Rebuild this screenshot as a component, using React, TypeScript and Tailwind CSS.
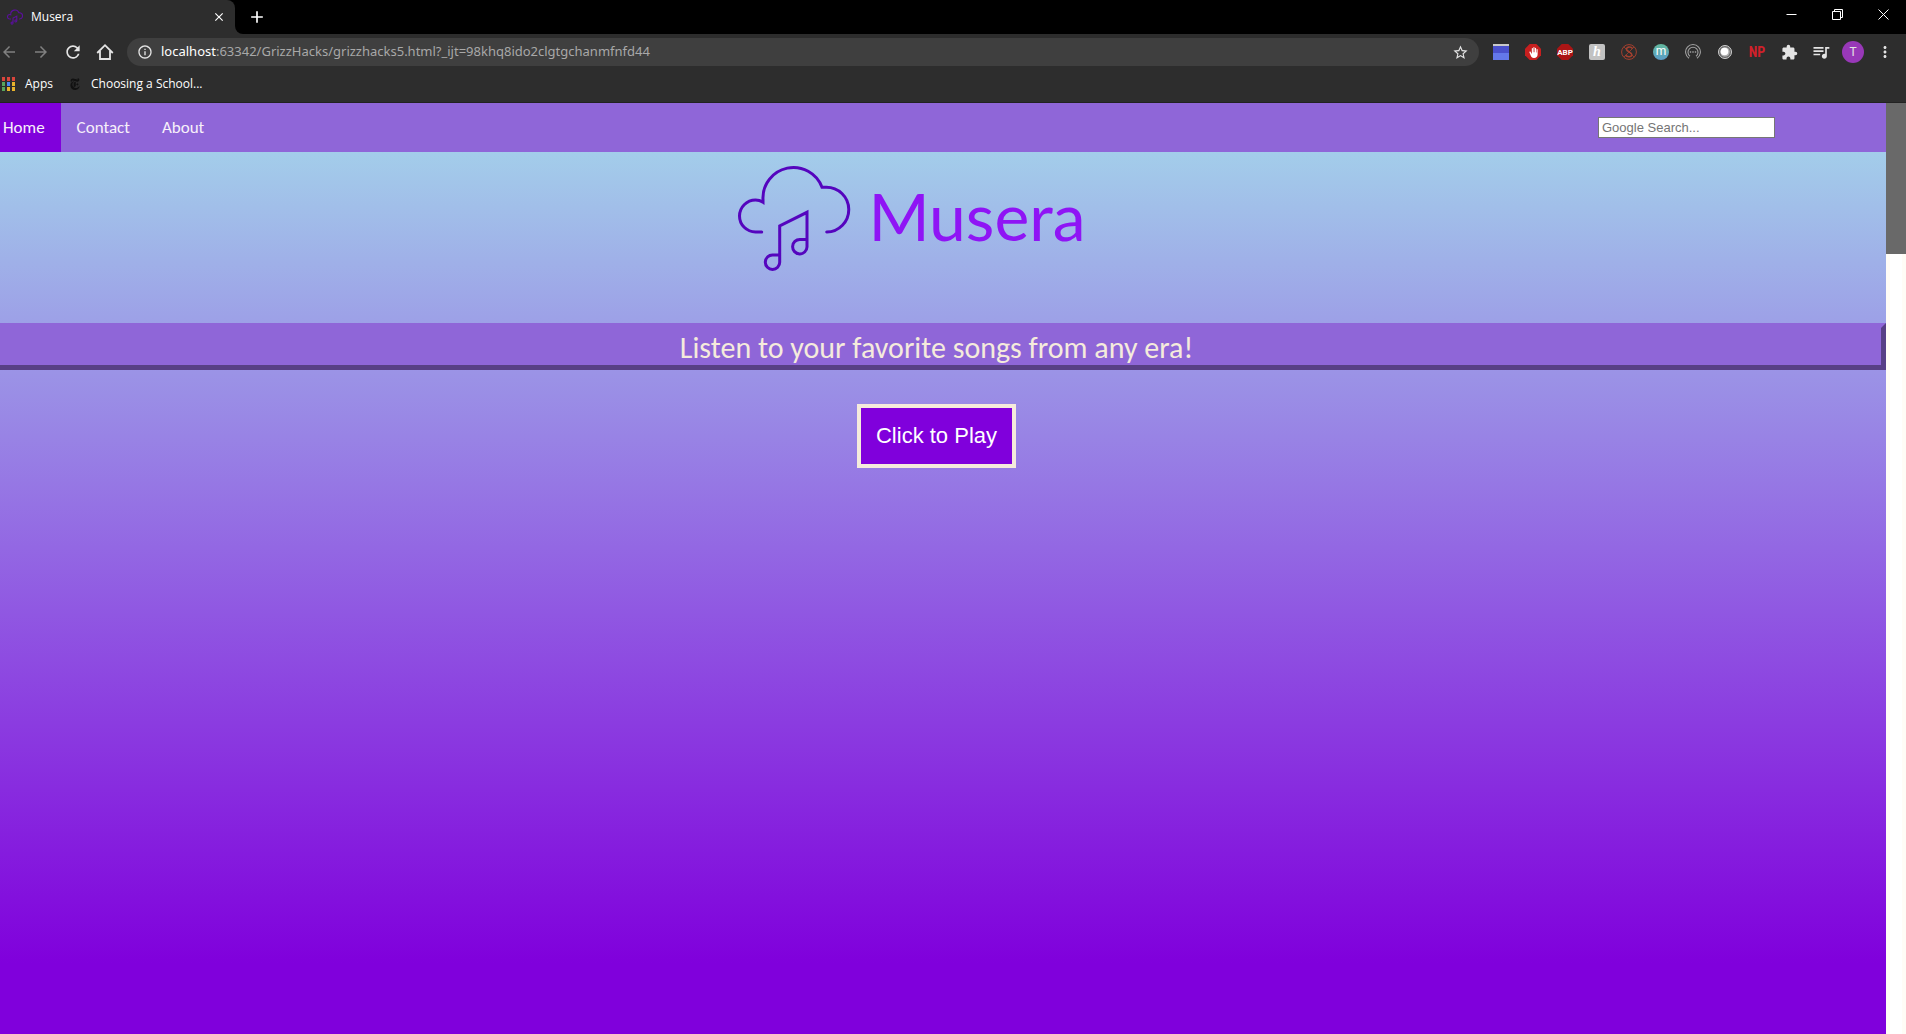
import { ReactNode } from "react";
import {
  MdStarBorder,
  MdRefresh,
  MdArrowBack,
  MdArrowForward,
  MdExtension,
  MdQueueMusic,
  MdInfoOutline,
  MdMoreVert,
  MdAdd,
  MdClose,
} from "react-icons/md";
import { IoHandRight } from "react-icons/io5";
import { SiNewyorktimes } from "react-icons/si";

const navLinks = [
  { label: "Contact", href: "#contact" },
  { label: "About", href: "#about" },
];

const appColors = [
  "bg-[#d9453c]", "bg-[#d9453c]", "bg-[#d9453c]",
  "bg-[#58a55c]", "bg-[#4a86f0]", "bg-[#e8b32c]",
  "bg-[#58a55c]", "bg-[#e8b32c]", "bg-[#e8b32c]",
];

function CloudNote({ className, strokeWidth }: { className: string; strokeWidth: number }) {
  return (
    <svg
      viewBox="0 0 116 106"
      className={className}
      fill="none"
      stroke="currentColor"
      strokeWidth={strokeWidth}
      strokeLinecap="round"
      aria-hidden="true"
    >
      <path d="M25.700 67H19.500a16 16 0 1 1 0-32q4 0 7.500 2.200V34.500A30.500 30.500 0 0 1 86 22.200H90A22.400 22.400 0 0 1 90.700 67" />
      <path d="M43.700 90V61L71 47.300V82a7.200 7.200 0 1 1-7-7.500H71M43.700 90V97a7.200 7.200 0 1 1-7-7H43.700" />
    </svg>
  );
}

function WindowButton({ label, d }: { label: string; d: string }) {
  return (
    <button aria-label={label} className="flex w-[46px] items-center justify-center">
      <svg viewBox="0 0 11 11" className="size-[11px]" fill="none" stroke="currentColor" aria-hidden="true">
        <path d={d} />
      </svg>
    </button>
  );
}

function TabStrip() {
  return (
    <div className="flex h-[34px] bg-[#2d2d2d] text-white">
      <div className="bg-black">
        <div className="flex h-full w-[235px] items-center rounded-tr-lg bg-[#2d2d2d] pl-[7px] pr-[9px]">
          <CloudNote className="size-4 text-[#5a109c]" strokeWidth={8} />
          <span className="ml-2 flex-1 text-xs">Musera</span>
          <button aria-label="Close tab">
            <MdClose className="size-[14px]" />
          </button>
        </div>
      </div>
      <div className="flex flex-1 justify-between rounded-bl-lg bg-black">
        <button aria-label="New tab" className="ml-3">
          <MdAdd className="size-5" />
        </button>
        <div className="flex pb-[5px]">
          <WindowButton label="Minimize" d="M0.500 5.500h10" />
          <WindowButton label="Restore" d="M0.500 2.500h8v8h-8zM2.500 2.500v-2h8v8h-2" />
          <WindowButton label="Close" d="M0.500 0.500l10 10M10.500 0.500l-10 10" />
        </div>
      </div>
    </div>
  );
}

function ToolButton({ label, children }: { label: string; children: ReactNode }) {
  return (
    <button aria-label={label} className="flex w-8 items-center justify-center">
      {children}
    </button>
  );
}

function Octagon({ color }: { color: string }) {
  return <path d="M4.700 0h6.600L16 4.700v6.600L11.300 16H4.700L0 11.300V4.700z" fill={color} />;
}

function Extensions() {
  return (
    <div className="ml-1.5 flex h-full pr-[5px]">
      <ToolButton label="Notes">
        <span className="size-4 border-t-2 border-[#c8c8c8] bg-linear-to-b from-[#4a50cc] from-50% to-[#6478ea] to-50%" />
      </ToolButton>
      <ToolButton label="AdBlock">
        <span className="grid size-4 place-items-center">
          <svg viewBox="0 0 16 16" className="col-start-1 row-start-1 size-4" aria-hidden="true">
            <Octagon color="#c71f1f" />
          </svg>
          <IoHandRight className="col-start-1 row-start-1 size-[11px] text-white" />
        </span>
      </ToolButton>
      <ToolButton label="Adblock Plus">
        <svg viewBox="0 0 16 16" className="size-4">
          <Octagon color="#ab1515" />
          <text x="8" y="11" textAnchor="middle" fill="#fff" className="font-['Roboto'] text-[8px] font-bold">ABP</text>
        </svg>
      </ToolButton>
      <ToolButton label="Honey">
        <span className="flex size-4 items-center justify-center rounded-xs bg-[#c2c2c2] font-['Liberation_Serif',serif] text-sm font-bold italic leading-none text-white">
          h
        </span>
      </ToolButton>
      <ToolButton label="Script blocker">
        <svg viewBox="0 0 16 16" className="size-4" fill="none" stroke="#a3402f" aria-hidden="true">
          <circle cx="8" cy="8" r="7.400" />
          <path d="M11.500 4.500C9.500 2 5 3 5.500 5.500S11 8 10.800 10.700 6 13.500 4.300 11" strokeWidth="1.600" />
          <path d="M2.700 2.700l10.600 10.600M13 3L3 13" strokeWidth="0.800" />
        </svg>
      </ToolButton>
      <ToolButton label="Mercury">
        <span className="flex size-4 items-center justify-center rounded-full bg-linear-to-b from-[#63b99c] to-[#5a9cc8] pb-0.5 font-['Roboto',sans-serif] text-xs leading-none text-white">
          m
        </span>
      </ToolButton>
      <ToolButton label="Podcast">
        <svg viewBox="0 0 16 16" className="size-4" fill="none" stroke="#a0a0a0" strokeWidth="1.100" aria-hidden="true">
          <path d="M4 14.200a7.400 7.400 0 1 1 8 0" />
          <path d="M5 12.300a5 5 0 1 1 6 0" />
          <path d="M4.800 8h1.400M7.300 8h1.400M9.800 8h1.400" strokeWidth="1.400" />
        </svg>
      </ToolButton>
      <ToolButton label="Lens">
        <svg viewBox="0 0 16 16" className="size-4" aria-hidden="true">
          <circle cx="8" cy="8" r="6.500" fill="#666" stroke="#d0d0d0" />
          <circle cx="8" cy="8" r="4.800" fill="#b0b0b0" />
          <circle cx="7.500" cy="7.500" r="3.800" fill="#fff" />
        </svg>
      </ToolButton>
      <ToolButton label="NP">
        <span className="font-['Liberation_Sans_Narrow','Roboto_Condensed',Roboto,sans-serif] text-sm font-bold leading-none text-[#d0202a]">
          NP
        </span>
      </ToolButton>
      <ToolButton label="Extensions">
        <MdExtension className="size-[17px]" />
      </ToolButton>
      <ToolButton label="Media controls">
        <MdQueueMusic className="size-5" />
      </ToolButton>
      <ToolButton label="Profile">
        <span className="flex size-[22px] items-center justify-center rounded-full bg-[#9838b8] font-['Roboto',sans-serif] text-xs leading-none">
          T
        </span>
      </ToolButton>
      <ToolButton label="Menu">
        <MdMoreVert className="size-[18px]" />
      </ToolButton>
    </div>
  );
}

function Toolbar() {
  return (
    <div className="flex h-9 items-center bg-[#2d2d2d] text-[#e4e4e4]">
      <button aria-label="Back" className="w-[25px] text-[#808080]">
        <MdArrowBack className="size-[18px]" />
      </button>
      <button aria-label="Forward" className="flex w-8 justify-center text-[#808080]">
        <MdArrowForward className="size-[18px]" />
      </button>
      <ToolButton label="Reload">
        <MdRefresh className="size-5" />
      </ToolButton>
      <ToolButton label="Home page">
        <svg viewBox="0 0 18 18" className="size-[18px]" fill="none" stroke="currentColor" strokeWidth="1.800" aria-hidden="true">
          <path d="M1.200 10 9 2.200 16.800 10M4 8V16h10V8" />
        </svg>
      </ToolButton>
      <div className="ml-1.5 flex h-7 flex-1 items-center rounded-full bg-[#3f3f3f] px-[10px]">
        <MdInfoOutline className="size-4" />
        <div
          role="textbox"
          aria-label="Address"
          tabIndex={0}
          className="ml-2 flex-1 font-['Noto_Sans',sans-serif] text-[13px] text-[#a8a8a8]"
        >
          <span className="text-white">localhost</span>:63342/GrizzHacks/grizzhacks5.html?_ijt=98khq8ido2clgtgchanmfnfd44
        </div>
        <button aria-label="Bookmark this page">
          <MdStarBorder className="size-[17px]" />
        </button>
      </div>
      <Extensions />
    </div>
  );
}

function BookmarksBar() {
  return (
    <div className="flex h-[33px] items-center border-b border-[#222] bg-[#2d2d2d] pb-1 pl-0.5 text-xs text-white">
      <a href="#apps" className="flex items-center gap-[10px]">
        <span className="grid grid-cols-3 gap-x-0.5 gap-y-px">
          {appColors.map((color, i) => (
            <span key={i} className={`h-1 w-[3px] ${color}`} />
          ))}
        </span>
        Apps
      </a>
      <a href="#school" className="ml-4 flex items-center gap-[10px]">
        <SiNewyorktimes className="size-3 text-[#111]" />
        Choosing a School...
      </a>
    </div>
  );
}

function Navbar() {
  return (
    <nav className="flex h-[49px] items-center bg-[#8f66d8] text-[17px] text-[#f7f0fa]">
      <a href="#home" className="flex h-full items-center bg-[#8000dc] pl-[3px] pr-4">
        Home
      </a>
      {navLinks.map((link) => (
        <a key={link.label} href={link.href} className="px-4">
          {link.label}
        </a>
      ))}
      <input
        type="text"
        aria-label="Google Search"
        placeholder="Google Search..."
        className="ml-auto mr-[111px] h-[21px] w-[177px] border border-[#767676] bg-white px-[3px] font-['Liberation_Sans',sans-serif] text-[13px] text-black placeholder:text-[#757575]"
      />
    </nav>
  );
}

export default function App() {
  return (
    <div className="flex min-h-screen flex-col font-['Open_Sans',sans-serif]">
      <TabStrip />
      <Toolbar />
      <BookmarksBar />
      <div className="flex flex-1">
        <div className="flex flex-1 flex-col font-['Carlito','Lato',sans-serif]">
          <Navbar />
          <main className="flex-1 bg-linear-to-b/srgb from-[#a3cdea] via-[#9b93e6] via-25% to-[#8000dc] to-92%">
            <div className="flex items-start justify-center gap-4 pb-[52px] pr-16 pt-[13px]">
              <CloudNote className="h-[106px] w-[116px] text-[#5505be]" strokeWidth={3} />
              <h1 className="mt-[18px] font-['Lato',sans-serif] text-[66px] leading-none text-[#8f14f5]">Musera</h1>
            </div>

            {/* Tagline */}
            <h2 className="flex h-[47px] items-center justify-center border-y-[5px] border-r-[5px] border-b-[#583f85] border-r-[#583f85] border-t-[#8f66d8] bg-[#8f66d8] pr-2 pt-0.5 text-3xl leading-none text-[#f5ebdc]">
              Listen to your favorite songs from any era!
            </h2>

            <div className="flex justify-center pr-[13px] pt-[34px]">
              <button className="h-16 border-4 border-[#f5ebdc] bg-[#8000dc] px-[15px] pb-0.5 font-['Liberation_Sans',sans-serif] text-[22px] text-white">
                Click to Play
              </button>
            </div>
          </main>
        </div>

        {/* Scrollbar */}
        <div className="w-5 border-x-4 border-[#fffcf6] bg-white">
          <div className="-mx-1 h-[151px] bg-[#696969]" />
        </div>
      </div>
    </div>
  );
}
